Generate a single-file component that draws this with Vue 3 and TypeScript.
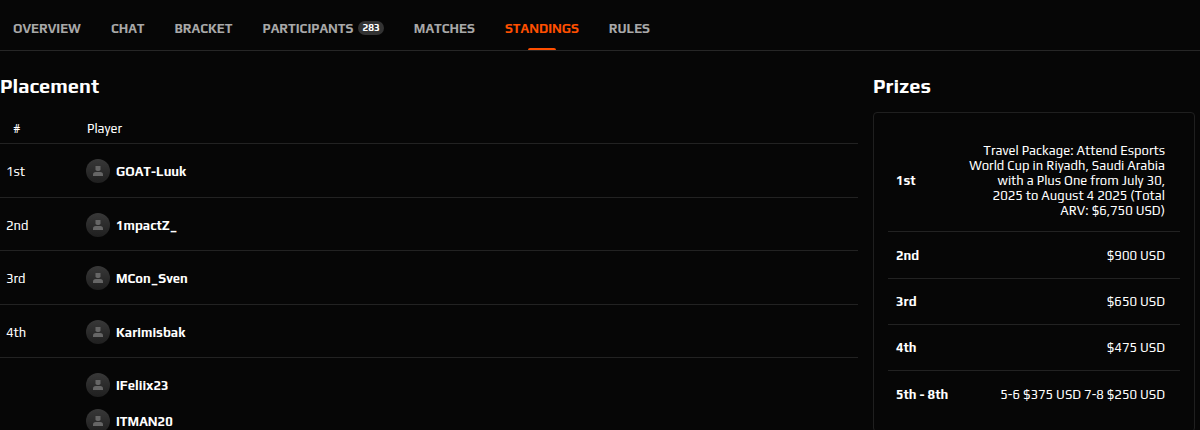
<script setup lang="ts">
interface Tab {
  label: string
  count?: number
  active?: boolean
}

interface Placement {
  place: string
  players: string[]
}

interface Prize {
  place: string
  reward: string
}

const tabs: Tab[] = [
  { label: 'OVERVIEW' },
  { label: 'CHAT' },
  { label: 'BRACKET' },
  { label: 'PARTICIPANTS', count: 283 },
  { label: 'MATCHES' },
  { label: 'STANDINGS', active: true },
  { label: 'RULES' },
]

const placements: Placement[] = [
  { place: '1st', players: ['GOAT-Luuk'] },
  { place: '2nd', players: ['1mpactZ_'] },
  { place: '3rd', players: ['MCon_Sven'] },
  { place: '4th', players: ['Karimisbak'] },
  { place: '', players: ['IFeliix23', 'ITMAN20'] },
]

const prizes: Prize[] = [
  {
    place: '1st',
    reward:
      'Travel Package: Attend Esports World Cup in Riyadh, Saudi Arabia with a Plus One from July 30, 2025 to August 4 2025 (Total ARV: $6,750 USD)',
  },
  { place: '2nd', reward: '$900 USD' },
  { place: '3rd', reward: '$650 USD' },
  { place: '4th', reward: '$475 USD' },
  { place: '5th - 8th', reward: '5-6 $375 USD 7-8 $250 USD' },
]
</script>

<template>
  <div class="page">
    <nav class="tabs" aria-label="Tournament">
      <a
        v-for="tab in tabs"
        :key="tab.label"
        href="#"
        class="tab"
        :class="{ active: tab.active }"
        :aria-current="tab.active ? 'page' : undefined"
      >
        <span>{{ tab.label }}</span>
        <span v-if="tab.count" class="count">{{ tab.count }}</span>
      </a>
    </nav>

    <main class="content">
      <section class="placement">
        <h2>Placement</h2>
        <table class="standings">
          <thead>
            <tr>
              <th class="rank" scope="col">#</th>
              <th class="name" scope="col">Player</th>
            </tr>
          </thead>
          <tbody>
            <tr v-for="row in placements" :key="row.players[0]">
              <td class="rank">{{ row.place }}</td>
              <td>
                <div class="players">
                  <a v-for="name in row.players" :key="name" href="#" class="player">
                    <span class="avatar">
                      <svg viewBox="0 0 24 24" width="24" height="24" aria-hidden="true">
                        <path d="M9.5 7h5v3.2q0 1.8-1.8 1.8h-1.4q-1.8 0-1.8-1.8z" />
                        <path d="M7 17v-1.2Q7 13 9.8 13h4.4q2.8 0 2.8 2.8V17z" />
                      </svg>
                    </span>
                    <span>{{ name }}</span>
                  </a>
                </div>
              </td>
            </tr>
          </tbody>
        </table>
      </section>

      <section class="prizes">
        <h2>Prizes</h2>
        <div class="card">
          <table class="prize-table">
            <tbody>
              <tr v-for="prize in prizes" :key="prize.place">
                <th scope="row">{{ prize.place }}</th>
                <td>{{ prize.reward }}</td>
              </tr>
            </tbody>
          </table>
        </div>
      </section>
    </main>
  </div>
</template>

<style>
body {
  margin: 0;
  background: #060606;
}
</style>

<style scoped>
.page {
  height: 100vh;
  overflow: hidden;
  box-sizing: border-box;
  background: #060606;
  color: #fff;
  font-family: Play, Inter, "Noto Sans", sans-serif;
  font-size: 13px;
  line-height: 15px;
}

a {
  color: inherit;
  text-decoration: none;
}

.tabs {
  display: flex;
  gap: 30px;
  height: 50px;
  padding-left: 13px;
  border-bottom: 1px solid #262626;
}

.tab {
  position: relative;
  display: flex;
  align-items: center;
  gap: 5px;
  padding-top: 6px;
  color: #a8a8a8;
  font-weight: 700;
}

.tab.active {
  color: #ff4f00;
}

.tab.active::after {
  content: "";
  position: absolute;
  bottom: 0;
  left: 50%;
  width: 28px;
  height: 2px;
  margin-left: -14px;
  border-radius: 2px 2px 0 0;
  background: #ff4f00;
}

.count {
  padding: 0 4px;
  border-radius: 7px;
  background: #333;
  color: #fff;
  font-size: 10px;
  line-height: 14px;
}

.content {
  display: grid;
  grid-template-columns: minmax(0, 1fr) 322px;
  gap: 15px;
  padding: 23px 5px 0 0;
}

h2 {
  margin: 0;
  font-size: 20px;
  line-height: 24px;
  font-weight: 700;
}

table {
  width: 100%;
  border-collapse: separate;
  border-spacing: 0;
}

th,
td {
  padding: 0;
  text-align: left;
  box-sizing: border-box;
}

.standings {
  margin-top: 15px;
}

.standings th {
  height: 31px;
  font-weight: 400;
  border-bottom: 1px solid #222;
}

.standings td {
  padding: 15px 0 14px;
  border-bottom: 1px solid #222;
}

.standings tr:nth-child(even) td {
  padding-bottom: 13px;
}

.standings .rank {
  width: 86px;
  padding-left: 6px;
}

.standings th.rank {
  padding-left: 13px;
}

.standings th.name {
  padding-left: 1px;
}

.players {
  display: flex;
  flex-direction: column;
  gap: 12px;
}

.player {
  display: flex;
  align-items: center;
  gap: 6px;
  font-weight: 700;
}

.avatar {
  display: block;
  width: 24px;
  height: 24px;
  border-radius: 50%;
  background: linear-gradient(#383838, #1f1f1f);
}

.avatar svg {
  display: block;
  fill: #666;
}

.card {
  margin-top: 14px;
  padding: 14px;
  border: 1px solid #1f1f1f;
  border-radius: 4px;
}

.prize-table th,
.prize-table td {
  height: 46px;
  border-bottom: 1px solid #222;
}

.prize-table tr:first-child > * {
  height: 105px;
  padding-top: 2px;
}

.prize-table tr:nth-child(2) > * {
  height: 47px;
}

.prize-table tr:last-child > * {
  border-bottom: 0;
}

.prize-table th {
  padding-left: 8px;
  font-weight: 700;
  white-space: nowrap;
}

.prize-table td {
  width: 214px;
  padding-right: 15px;
  text-align: right;
}
</style>
